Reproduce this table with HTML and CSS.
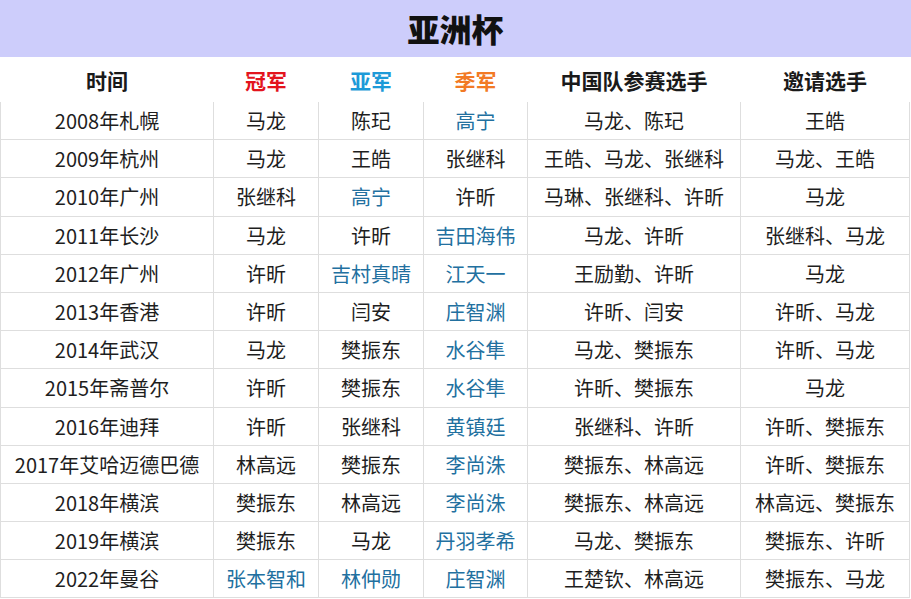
FILE: index.html
```html
<!DOCTYPE html>
<html lang="zh-CN">
<head>
<meta charset="utf-8">
<title>亚洲杯</title>
<link rel="stylesheet" href="styles.css">
</head>
<body>
<div class="page">
  <div class="title">亚洲杯</div>
  <table class="cup">
    <colgroup>
      <col class="c-time"><col class="c-gold"><col class="c-silver"><col class="c-bronze"><col class="c-team"><col class="c-invite">
    </colgroup>
    <thead>
      <tr>
        <th>时间</th>
        <th class="h-gold">冠军</th>
        <th class="h-silver">亚军</th>
        <th class="h-bronze">季军</th>
        <th>中国队参赛选手</th>
        <th>邀请选手</th>
      </tr>
    </thead>
    <tbody>
      <tr><td>2008年札幌</td><td>马龙</td><td>陈玘</td><td class="fx">高宁</td><td>马龙、陈玘</td><td>王皓</td></tr>
      <tr><td>2009年杭州</td><td>马龙</td><td>王皓</td><td>张继科</td><td>王皓、马龙、张继科</td><td>马龙、王皓</td></tr>
      <tr><td>2010年广州</td><td>张继科</td><td class="fx">高宁</td><td>许昕</td><td>马琳、张继科、许昕</td><td>马龙</td></tr>
      <tr><td>2011年长沙</td><td>马龙</td><td>许昕</td><td class="fx">吉田海伟</td><td>马龙、许昕</td><td>张继科、马龙</td></tr>
      <tr><td>2012年广州</td><td>许昕</td><td class="fx">吉村真晴</td><td class="fx">江天一</td><td>王励勤、许昕</td><td>马龙</td></tr>
      <tr><td>2013年香港</td><td>许昕</td><td>闫安</td><td class="fx">庄智渊</td><td>许昕、闫安</td><td>许昕、马龙</td></tr>
      <tr><td>2014年武汉</td><td>马龙</td><td>樊振东</td><td class="fx">水谷隼</td><td>马龙、樊振东</td><td>许昕、马龙</td></tr>
      <tr><td>2015年斋普尔</td><td>许昕</td><td>樊振东</td><td class="fx">水谷隼</td><td>许昕、樊振东</td><td>马龙</td></tr>
      <tr><td>2016年迪拜</td><td>许昕</td><td>张继科</td><td class="fx">黄镇廷</td><td>张继科、许昕</td><td>许昕、樊振东</td></tr>
      <tr><td>2017年艾哈迈德巴德</td><td>林高远</td><td>樊振东</td><td class="fx">李尚洙</td><td>樊振东、林高远</td><td>许昕、樊振东</td></tr>
      <tr><td>2018年横滨</td><td>樊振东</td><td>林高远</td><td class="fx">李尚洙</td><td>樊振东、林高远</td><td>林高远、樊振东</td></tr>
      <tr><td>2019年横滨</td><td>樊振东</td><td>马龙</td><td class="fx">丹羽孝希</td><td>马龙、樊振东</td><td>樊振东、许昕</td></tr>
      <tr><td>2022年曼谷</td><td class="fx">张本智和</td><td class="fx">林仲勋</td><td class="fx">庄智渊</td><td>王楚钦、林高远</td><td>樊振东、马龙</td></tr>
    </tbody>
  </table>
</div>
</body>
</html>
```
FILE: styles.css
```css
html, body {
  margin: 0;
  padding: 0;
  background: #ffffff;
}
body {
  font-family: "Noto Sans CJK SC", "Noto Sans", sans-serif;
  color: #1c1c1c;
  width: 911px;
  height: 599px;
  overflow: hidden;
}
.page {
  width: 911px;
}
.title {
  height: 57px;
  line-height: 57px;
  background: #cdcdfb;
  text-align: center;
  font-size: 32px;
  font-weight: 900;
  color: #111111;
}
.cup {
  border-collapse: collapse;
  table-layout: fixed;
  width: 909px;
}
.c-time { width: 213px; }
.c-gold { width: 105px; }
.c-silver { width: 105px; }
.c-bronze { width: 104px; }
.c-team { width: 213px; }
.c-invite { width: 169px; }
.cup th {
  height: 45px;
  padding: 0;
  font-size: 21px;
  font-weight: 700;
  color: #1a1a1a;
  text-align: center;
  vertical-align: middle;
  border: none;
}
.cup th.h-gold { color: #e3141d; }
.cup th.h-silver { color: #1d9ad8; }
.cup th.h-bronze { color: #f27a25; }
.cup td {
  height: 37.2px;
  padding: 0;
  font-size: 20px;
  text-align: center;
  vertical-align: middle;
  white-space: nowrap;
  border: 1px solid #dedede;
  color: #1e1e1e;
}
.cup tbody tr:first-child td {
  border-top: none;
}
.cup td.fx {
  color: #22709f;
}
```
